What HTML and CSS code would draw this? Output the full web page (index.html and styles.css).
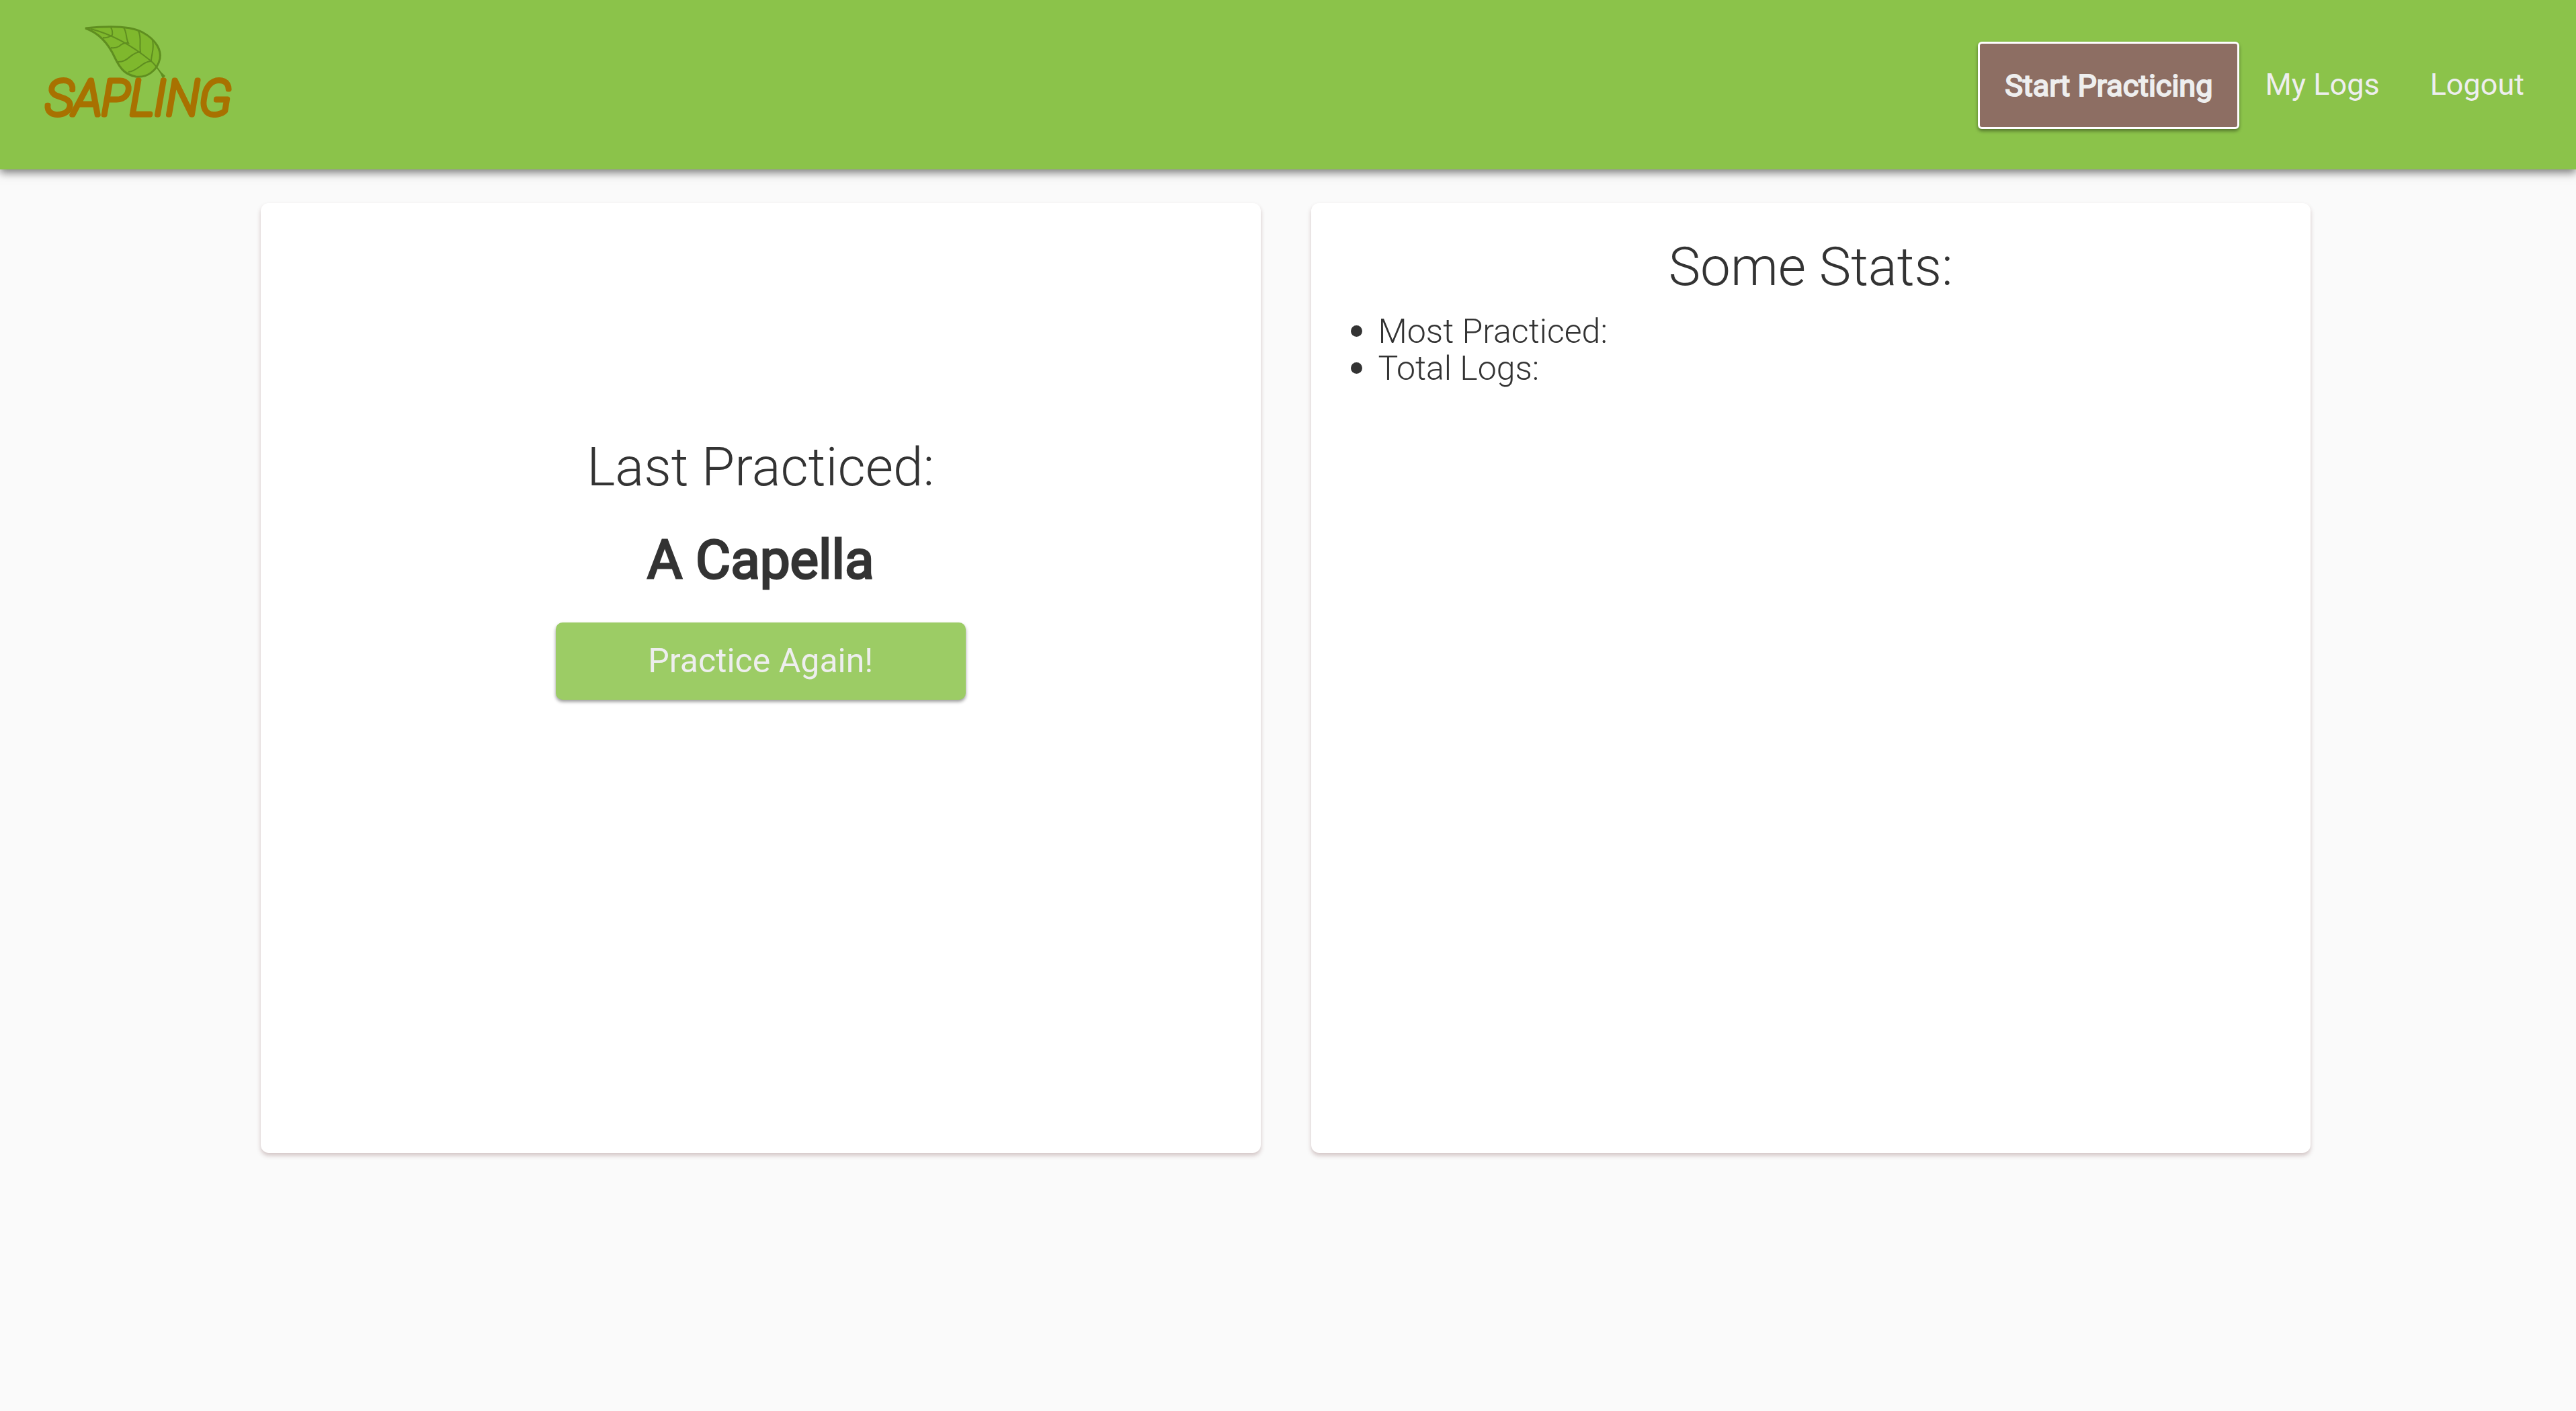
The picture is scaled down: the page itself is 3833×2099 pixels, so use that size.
FILE: index.html
```html
<!DOCTYPE html>
<html lang="en">
<head>
<meta charset="utf-8">
<meta name="viewport" content="width=device-width, initial-scale=1">
<title>Sapling</title>
<link rel="stylesheet" href="styles.css">
</head>
<body>
<header class="site-header">
  <a class="brand" href="#" aria-label="Sapling home">
    <svg class="logo" viewBox="0 0 330 170" role="img" aria-label="Sapling">
      <path class="leaf" d="M87 22C125 18 155 19 172 28C194 40 200 56 198 67C194 86 178 96 162 94C148 91 140 85 131 66C121 44 107 29 87 22Z"/>
      <g class="veins">
        <path d="M95 23C127 31 158 49 185 71C193 78 198 87 204 95" stroke-width="2"/>
        <path d="M125 21Q128 26 127 32Q120 37 113 36"/>
        <path d="M144 21C149 28 147 37 151 44Q144 43 137 49Q132 52 125 51"/>
        <path d="M166 26C171 37 167 46 169 57C154 58 151 73 135 72"/>
        <path d="M187 40C190 53 185 61 185 71C172 71 165 86 151 87"/>
      </g>
      <path class="stem" d="M193 80Q200 88 206 93L202 97Q199 88 193 80Z"/>
      <text class="wordmark" x="28" y="151">SAPLING</text>
    </svg>
  </a>
  <nav class="nav" aria-label="Main">
    <button class="nav-start" type="button">Start Practicing</button>
    <a class="nav-link" href="#">My Logs</a>
    <a class="nav-link" href="#">Logout</a>
  </nav>
</header>
<main class="panels">
  <section class="card card-last">
    <h2 class="title">Last Practiced:</h2>
    <p class="piece">A Capella</p>
    <button class="again" type="button">Practice Again!</button>
  </section>
  <section class="card card-stats">
    <h2 class="title">Some Stats:</h2>
    <ul class="stats">
      <li>Most Practiced:</li>
      <li>Total Logs:</li>
    </ul>
  </section>
</main>
</body>
</html>
```

FILE: styles.css
```css
* { box-sizing: border-box; }

body {
  margin: 0;
  background: #fafafa;
  color: #333;
  font-family: Roboto, "Liberation Sans", sans-serif;
  font-size: 50px;
  font-weight: 300;
  line-height: 55px;
}

.site-header {
  display: flex;
  justify-content: space-between;
  align-items: flex-start;
  padding: 20px 40px 60px;
  background: #8bc34a;
  box-shadow: 0 5px 12px rgba(0, 0, 0, 0.5);
}

.brand { display: block; }
.logo { display: block; width: 330px; height: 170px; }
.leaf { fill: #7fb82d; stroke: #5f8e20; stroke-width: 3; }
.veins { fill: none; stroke: #5f8e20; stroke-width: 2; }
.stem { fill: #5f8e20; }
.wordmark {
  font-family: Roboto, sans-serif;
  font-size: 72px;
  font-style: italic;
  font-weight: 100;
  fill: #a87100;
  stroke: #a87100;
  stroke-width: 7;
  stroke-linejoin: round;
}

.nav {
  display: flex;
  align-items: center;
  padding-top: 42px;
  font-size: 45px;
  font-weight: 400;
}

.nav-start {
  height: 130px;
  padding: 0 37px;
  border: 3px solid #fff;
  border-radius: 6px;
  background: #8d6e63;
  box-shadow: 0 3px 5px rgba(0, 0, 0, 0.4);
  color: #eee;
  font: inherit;
  -webkit-text-stroke: 2px #eee;
}

.nav-link {
  padding: 0 37px 4px 38px;
  color: #eee;
  text-decoration: none;
}

.panels {
  display: grid;
  grid-template-columns: 1fr 1fr;
  gap: 75px;
  margin: 50px auto;
  padding: 0 395px 0 388px;
}

.card {
  min-height: 1413px;
  border-radius: 12px;
  background: #fff;
  box-shadow: 0 4px 6px rgba(93, 40, 40, 0.25);
}

.card-last {
  display: flex;
  flex-direction: column;
  align-items: center;
  padding-top: 346px;
}

.title {
  margin: 0;
  font-size: 80px;
  font-weight: 300;
  line-height: 94px;
  text-align: center;
}

.piece {
  margin: 44px 0 46px;
  font-size: 80px;
  font-weight: 400;
  line-height: 94px;
  -webkit-text-stroke: 3px #333;
}

.again {
  width: 41%;
  height: 115px;
  border: 0;
  border-radius: 10px;
  background: #9ccc65;
  box-shadow: 0 3px 5px rgba(0, 0, 0, 0.4);
  color: #eee;
  font: inherit;
  font-weight: 400;
}

.card-stats { padding-top: 48px; }

.stats {
  margin: 20px 0 0;
  padding-left: 100px;
}

.stats li { height: 55px; }
.stats li::marker { font-size: 55px; }
```
